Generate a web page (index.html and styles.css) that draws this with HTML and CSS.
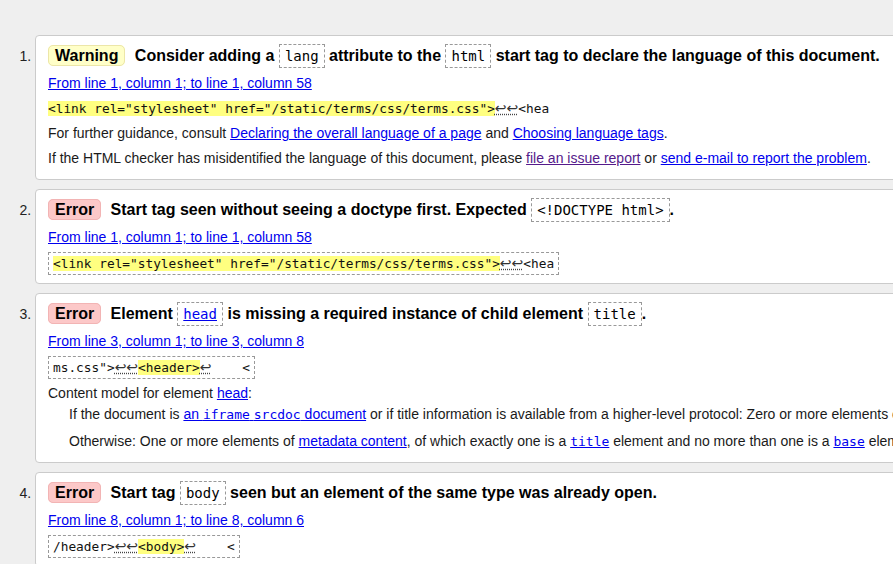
FILE: index.html
```html
<!DOCTYPE html>
<html lang="en">
<head>
<meta charset="utf-8">
<title>Nu Html Checker results</title>
<link rel="stylesheet" href="styles.css">
</head>
<body>
<ol class="results">
  <li class="msg warning">
    <p class="head"><strong class="badge">Warning</strong> <span>Consider adding a <code>lang</code> attribute to the <code>html</code> start tag to declare the language of this document.</span></p>
    <p class="loc"><a href="#">From line 1, column 1; to line 1, column 58</a></p>
    <p class="extract"><code><b>&lt;link rel="stylesheet" href="/static/terms/css/terms.css"&gt;</b><span class="lf">↩↩</span>&lt;hea</code></p>
    <p>For further guidance, consult <a href="#">Declaring the overall language of a page</a> and <a href="#">Choosing language tags</a>.</p>
    <p>If the HTML checker has misidentified the language of this document, please <a href="#" class="visited">file an issue report</a> or <a href="#">send e-mail to report the problem</a>.</p>
  </li>
  <li class="msg error">
    <p class="head"><strong class="badge">Error</strong> <span>Start tag seen without seeing a doctype first. Expected <code>&lt;!DOCTYPE html&gt;</code>.</span></p>
    <p class="loc"><a href="#">From line 1, column 1; to line 1, column 58</a></p>
    <p class="extract boxed"><code><b>&lt;link rel="stylesheet" href="/static/terms/css/terms.css"&gt;</b><span class="lf">↩↩</span>&lt;hea</code></p>
  </li>
  <li class="msg error">
    <p class="head"><strong class="badge">Error</strong> <span>Element <code><a href="#">head</a></code> is missing a required instance of child element <code>title</code>.</span></p>
    <p class="loc"><a href="#">From line 3, column 1; to line 3, column 8</a></p>
    <p class="extract boxed"><code>ms.css"&gt;<span class="lf">↩↩</span><b>&lt;header&gt;</b><span class="lf">↩</span>    &lt;</code></p>
    <dl class="model">
      <dt>Content model for element <a href="#">head</a>:</dt>
      <dd>If the document is <a href="#">an <code>iframe</code> <code>srcdoc</code> document</a> or if title information is available from a higher-level protocol: Zero or more elements of <a href="#">metadata content</a>, of which no more than one is a <a href="#"><code>title</code></a> element and no more than one is a <a href="#"><code>base</code></a> element.</dd>
      <dd>Otherwise: One or more elements of <a href="#">metadata content</a>, of which exactly one is a <a href="#"><code>title</code></a> element and no more than one is a <a href="#"><code>base</code></a> element.</dd>
    </dl>
  </li>
  <li class="msg error">
    <p class="head"><strong class="badge">Error</strong> <span>Start tag <code>body</code> seen but an element of the same type was already open.</span></p>
    <p class="loc"><a href="#">From line 8, column 1; to line 8, column 6</a></p>
    <p class="extract boxed"><code>/header&gt;<span class="lf">↩↩</span><b>&lt;body&gt;</b><span class="lf">↩</span>    &lt;</code></p>
  </li>
</ol>
</body>
</html>
```

FILE: styles.css
```css
html, body {
  margin: 0;
  padding: 0;
  background: #efefef;
  overflow: hidden;
}

body {
  font-family: "Liberation Sans", Arial, sans-serif;
  font-size: 14px;
  color: #1a1a1a;
}

a {
  color: #0000ee;
}

a.visited {
  color: #551a8b;
}

.results {
  margin: 0;
  padding: 35px 0 0 35px;
  width: 1800px;
}

.msg {
  background: #fff;
  border: 1px solid #cbcbcb;
  border-radius: 4px;
  padding: 9px 12px 4px;
  margin: 0 0 9px;
}

.msg::marker {
  color: #222;
}

.msg p {
  margin: 0 0 8px;
  line-height: 17px;
}

.msg p.head {
  font-size: 16px;
  font-weight: bold;
  line-height: 22px;
  color: #000;
}

.badge {
  padding: 1px 6px;
  border: 1px solid;
  border-radius: 5px;
  margin-right: 5px;
}

.warning .badge {
  background: #ffffc8;
  border-color: #ece6a8;
}

.error .badge {
  background: #fcc8c8;
  border-color: #f2b4b4;
}

.head code {
  font-family: "DejaVu Sans Mono", monospace;
  font-size: 14px;
  font-weight: normal;
  border: 1px dashed #999;
  padding: 3px 5px;
}

.msg p.extract {
  height: 17px;
}

.extract code {
  display: inline-block;
  vertical-align: top;
  font-family: "DejaVu Sans Mono", monospace;
  font-size: 12.8px;
  line-height: 15px;
  white-space: pre;
  color: #111;
  margin-top: 1px;
}

.extract.boxed code {
  border: 1px dashed #999;
  padding: 3px 4px;
  margin-top: -2px;
}

.extract b {
  font-weight: normal;
  background: #ffff80;
}

.lf {
  font-family: "DejaVu Sans", sans-serif;
  font-size: 14px;
  color: #333;
  text-decoration: underline dotted #444;
}

.model {
  margin: 0;
  padding-top: 2px;
}

.model dt {
  line-height: 17px;
  margin: 0 0 4px;
}

.model dd {
  line-height: 17px;
  margin: 0 0 10px 21px;
}

.model dd:last-child {
  margin-bottom: 8px;
}

.model code {
  font-family: "DejaVu Sans Mono", monospace;
  font-size: 13px;
}
```
